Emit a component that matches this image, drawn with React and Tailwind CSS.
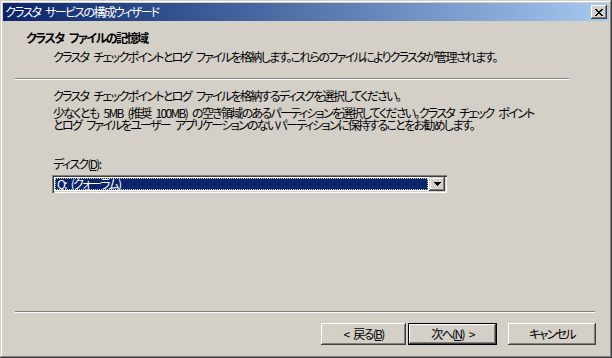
export default function App() {
  return (
    <div className="relative w-[612px] h-[358px] overflow-hidden bg-[#d4d0c8] shadow-[inset_-1px_-1px_#404040,inset_1px_1px_#d4d0c8,inset_-2px_-2px_#808080,inset_2px_2px_#ffffff] font-['Noto_Sans_CJK_JP',sans-serif] text-[12px] leading-[12px] tracking-[-1.7px] [word-spacing:4px] text-black [font-feature-settings:'palt'] flex flex-col">
      {/* title bar */}
      <div className="mx-[3px] mt-[3px] h-[18px] flex items-center bg-linear-to-r from-[#0a246a] to-[#a6caf0]">
        <span className="pl-[2px] text-white text-[12px] leading-[12px]">クラスタ サービスの構成ウィザード</span>
        <div className="ml-auto mr-[2px] w-[16px] h-[14px] bg-[#d4d0c8] shadow-[inset_-1px_-1px_#404040,inset_1px_1px_#ffffff,inset_-2px_-2px_#808080,inset_2px_2px_#d4d0c8] flex items-center justify-center">
          <svg width="8" height="7" viewBox="0 0 8 7" shapeRendering="crispEdges">
            <path d="M0 0h2v1H0zM6 0h2v1H6zM1 1h2v1H1zM5 1h2v1H5zM2 2h4v1H2zM3 3h2v1H3zM2 4h4v1H2zM1 5h2v1H1zM5 5h2v1H5zM0 6h2v1H0zM6 6h2v1H6z" fill="#000" />
          </svg>
        </div>
      </div>

      {/* header */}
      <div className="pl-[26px] mt-[11px] font-bold tracking-[-1.5px]">クラスタ ファイルの記憶域</div>
      <div className="pl-[53px] mt-[7px]">クラスタ チェックポイントとログ ファイルを格納します。これらのファイルによりクラスタが管理されます。</div>

      {/* separator */}
      <div className="ml-[15px] w-[554px] mt-[15px] h-[2px] border-t border-t-[#808080] border-b border-b-white" />

      {/* content */}
      <div className="pl-[53px] mt-[10px]">クラスタ チェックポイントとログ ファイルを格納するディスクを選択してください。</div>
      <div className="pl-[53px] mt-[5px] leading-[12px]">
        <div>少なくとも 5MB (推奨 100MB) の空き領域のあるパーティションを選択してください。クラスタ チェック ポイント</div>
        <div>とログ ファイルをユーザー アプリケーションのないパーティションに保持することをお勧めします。</div>
      </div>

      <div className="pl-[53px] mt-[27px]">
        ディスク(<span className="underline">D</span>):
      </div>

      <div className="ml-[52px] mt-[5px] w-[395px] h-[18px] bg-white shadow-[inset_1px_1px_#808080,inset_2px_2px_#404040,inset_-1px_-1px_#ffffff,inset_-2px_-2px_#d4d0c8] p-[2px] flex">
        <div className="flex-1 m-[1px] bg-[#0a246a] text-white outline-1 outline-dotted outline-[#d4d0c8] -outline-offset-1 flex items-center pl-[2px]">
          Q: (クォーラム)
        </div>
        <div className="w-[16px] h-[14px] bg-[#d4d0c8] shadow-[inset_-1px_-1px_#404040,inset_1px_1px_#d4d0c8,inset_-2px_-2px_#808080,inset_2px_2px_#ffffff] flex items-center justify-center">
          <svg width="7" height="4" viewBox="0 0 7 4" shapeRendering="crispEdges">
            <path d="M0 0h7v1H0zM1 1h5v1H1zM2 2h3v1H2zM3 3h1v1H3z" fill="#000" />
          </svg>
        </div>
      </div>

      <div className="flex-1" />

      {/* bottom separator */}
      <div className="ml-[15px] w-[580px] h-[2px] border-t border-t-[#808080] border-b border-b-white" />

      <div className="flex pl-[321px] mt-[10px] mb-[13px]">
        <div className="w-[85px] h-[22px] bg-[#d4d0c8] shadow-[inset_-1px_-1px_#404040,inset_1px_1px_#ffffff,inset_-2px_-2px_#808080,inset_2px_2px_#d4d0c8] flex items-center justify-center">
          &lt; 戻る(<span className="underline">B</span>)
        </div>
        <div className="ml-[2px] w-[89px] h-[22px] bg-[#d4d0c8] border border-black shadow-[inset_-1px_-1px_#404040,inset_1px_1px_#ffffff,inset_-2px_-2px_#808080,inset_2px_2px_#d4d0c8] flex items-center justify-center">
          次へ(<span className="underline">N</span>) &gt;
        </div>
        <div className="ml-[11px] w-[88px] h-[22px] bg-[#d4d0c8] shadow-[inset_-1px_-1px_#404040,inset_1px_1px_#ffffff,inset_-2px_-2px_#808080,inset_2px_2px_#d4d0c8] flex items-center justify-center">
          キャンセル
        </div>
      </div>
    </div>
  );
}
